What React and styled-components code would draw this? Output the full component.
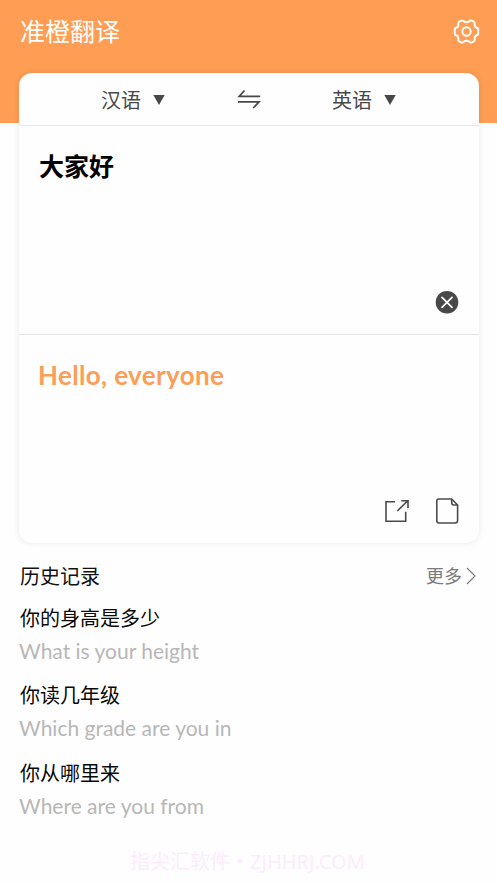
import React from "react";
import styled, { createGlobalStyle } from "styled-components";

const GlobalStyle = createGlobalStyle`
  * {
    box-sizing: border-box;
  }
  body {
    margin: 0;
    background-color: #fefefe;
    font-family: Lato, "Noto Sans CJK SC", sans-serif;
  }
`;
const Page = styled.div`
  height: 883px;
  display: flex;
  flex-direction: column;
  overflow: hidden;
`;
const Header = styled.header`
  flex: none;
  height: 123px;
  padding: 11px 17px 0 20px;
  display: flex;
  justify-content: space-between;
  align-items: flex-start;
  background-color: #fe9d53;
  color: #fff;
  h1 {
    margin: 0;
    font-size: 25px;
    line-height: 40px;
    font-weight: 400;
  }
  svg {
    margin-top: 7px;
  }
`;
const Card = styled.main`
  flex: none;
  height: 470px;
  margin: -50px 18px 0 19px;
  display: flex;
  flex-direction: column;
  background-color: #fefefe;
  border-radius: 13px;
  box-shadow: 0 0 6px rgba(0, 0, 0, 0.09);
`;
const LanguageBar = styled.div`
  height: 53px;
  padding: 2px 83px 0 82px;
  display: flex;
  justify-content: space-between;
  align-items: center;
  border-bottom: 1px solid #e6e6e6;
  color: #484848;
`;
const Language = styled.div`
  display: flex;
  align-items: center;
  gap: 12px;
  font-size: 20px;
  line-height: 30px;
`;
const Panel = styled.section`
  height: ${props => props.$height}px;
  padding: ${props => props.$padding};
  display: flex;
  flex-direction: column;
  justify-content: space-between;
  border-bottom: ${props => (props.$divider ? "1px solid #e6e6e6" : "none")};
  p {
    margin: 0;
    font-size: ${props => props.$size}px;
    line-height: 36px;
    font-weight: bold;
    letter-spacing: ${props => props.$spacing || "normal"};
    color: ${props => props.$color};
  }
`;
const Actions = styled.div`
  display: flex;
  justify-content: flex-end;
  align-items: center;
  gap: ${props => props.$gap || 0}px;
`;
const History = styled.section`
  padding: 18px 20px 0;
`;
const HistoryHeader = styled.div`
  display: flex;
  justify-content: space-between;
  align-items: center;
  height: 30px;
  margin-bottom: 12px;
  h2 {
    margin: 0;
    font-size: 20px;
    line-height: 30px;
    font-weight: 400;
    color: #111;
  }
`;
const More = styled.div`
  display: flex;
  align-items: center;
  gap: 4px;
  font-size: 18px;
  line-height: 26px;
  color: #7b7b7b;
`;
const HistoryItem = styled.div`
  height: 77.3px;
  p {
    margin: 0;
    font-size: 20px;
    line-height: 30px;
    color: #080808;
  }
  span {
    display: block;
    margin-top: 4px;
    margin-left: -1px;
    font-size: 21px;
    line-height: 28px;
    color: #b7b7b7;
  }
`;
const Footer = styled.footer`
  margin-top: 12px;
  padding-left: 130px;
  font-family: "Noto Sans", "Noto Sans CJK SC", sans-serif;
  font-size: 20px;
  line-height: 30px;
  white-space: nowrap;
  color: #fdecfd;
`;

const history = [
  { text: "你的身高是多少", translation: "What is your height" },
  { text: "你读几年级", translation: "Which grade are you in" },
  { text: "你从哪里来", translation: "Where are you from" }
];

const GearIcon = () => (
  <svg width="27" height="27" viewBox="-13.5 -13.5 27 27" fill="none" stroke="#fff" strokeWidth="2">
    <path d="M11.7 0V2.2Q11.7 3.6 10.4 3.8Q8 4.4 8.2 7.3Q8.5 9 7.3 9.8L5.3 10.9Q4 11.4 3 10.4Q0 8.3 -3 10.4Q-4 11.4 -5.3 10.9L-7.3 9.8Q-8.5 9 -8.2 7.3Q-8 4.4 -10.4 3.8Q-11.7 3.6 -11.7 2.2V-2.2Q-11.7 -3.6 -10.4 -3.8Q-8 -4.4 -8.2 -7.3Q-8.5 -9 -7.3 -9.8L-5.3 -10.9Q-4 -11.4 -3 -10.4Q0 -8.3 3 -10.4Q4 -11.4 5.3 -10.9L7.3 -9.8Q8.5 -9 8.2 -7.3Q8 -4.4 10.4 -3.8Q11.7 -3.6 11.7 -2.2Z" />
    <circle r="4.2" />
  </svg>
);
const Triangle = () => (
  <svg width="12" height="10" viewBox="0 0 12 10" fill="#484848">
    <path d="M0.3 0H11.7L6 10Z" />
  </svg>
);
const SwapIcon = () => (
  <svg width="24" height="20" viewBox="0 0 24 20" fill="none" stroke="#484848" strokeWidth="1.7">
    <path d="M7.5 0.5L2.2 6.4H23.2M1 11.8H22L16.2 18" />
  </svg>
);
const ClearIcon = () => (
  <svg width="24" height="24" viewBox="0 0 24 24">
    <circle cx="12" cy="12.3" r="11.3" fill="#484848" />
    <path d="M7 7.3L17 17.3M17 7.3L7 17.3" stroke="#fff" strokeWidth="1.7" strokeLinecap="round" />
  </svg>
);
const ShareIcon = () => (
  <svg width="26" height="24" viewBox="0 0 26 24" fill="none" stroke="#4b4b4b" strokeWidth="1.6">
    <path d="M11 2.7H2V22.2H21.7V12.7M13.3 12L23.8 1.8M17.2 1.7H24V9" />
  </svg>
);
const PageIcon = () => (
  <svg width="24" height="26" viewBox="0 0 24 26" fill="none" stroke="#4b4b4b" strokeWidth="1.6" strokeLinejoin="round">
    <path d="M3.7 1H16.7L22.6 7V22.5Q22.6 25 20.1 25H4Q1.8 25 1.8 22.5V3Q1.8 1 3.7 1Z" />
    <path d="M16.7 1V4.8Q16.7 7 18.7 7H22.6" />
  </svg>
);
const ChevronIcon = () => (
  <svg width="11" height="18" viewBox="0 0 11 18" fill="none" stroke="#7b7b7b" strokeWidth="1.1">
    <path d="M1 1L9 9L1 17" />
  </svg>
);

const App = () => {
  return (
    <>
      <GlobalStyle />
      <Page>
        <Header>
          <h1>准橙翻译</h1>
          <GearIcon />
        </Header>
        <Card>
          <LanguageBar>
            <Language>
              汉语
              <Triangle />
            </Language>
            <SwapIcon />
            <Language>
              英语
              <Triangle />
            </Language>
          </LanguageBar>
          <Panel $height={209} $padding="22px 20px 20px" $size={25} $color="#000" $divider>
            <p>大家好</p>
            <Actions>
              <ClearIcon />
            </Actions>
          </Panel>
          <Panel $height={208} $padding="22px 20px 19px 19px" $size={26} $color="#fb9f58" $spacing="0.35px">
            <p>Hello, everyone</p>
            <Actions $gap={25}>
              <ShareIcon />
              <PageIcon />
            </Actions>
          </Panel>
        </Card>
        <History>
          <HistoryHeader>
            <h2>历史记录</h2>
            <More>
              更多
              <ChevronIcon />
            </More>
          </HistoryHeader>
          {history.map(item => (
            <HistoryItem key={item.text}>
              <p>{item.text}</p>
              <span>{item.translation}</span>
            </HistoryItem>
          ))}
        </History>
        <Footer>指尖汇软件・ZJHHRJ.COM</Footer>
      </Page>
    </>
  );
};

export default App;
